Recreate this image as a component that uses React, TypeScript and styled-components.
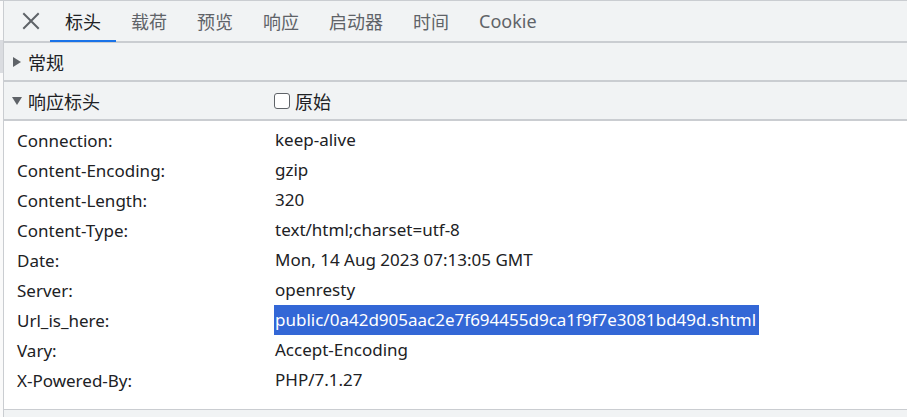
import React from 'react'
import styled, {createGlobalStyle} from 'styled-components'

const GlobalStyle = createGlobalStyle`
  html, body {
    margin: 0;
    padding: 0;
    background: #f1f3f4;
  }
  body {
    font-family: 'Segoe UI', 'Noto Sans', 'Noto Sans CJK SC', sans-serif;
    color: #202124;
  }
`

const Layout = styled.div`
  display: flex;
  width: 907px;
  height: 417px;
  overflow: hidden;
  border-top: 1px solid #cacdd1;
  box-sizing: border-box;
`

const SideStrip = styled.div`
  width: 3px;
  flex: none;
  display: flex;
  flex-direction: column;
  background: #fafafa;
  padding-top: 39px;
`

const SideMark = styled.div`
  height: 33px;
  background: #dadce0;
`

const Panel = styled.div`
  flex: 1;
  display: flex;
  flex-direction: column;
  border-left: 1px solid #cacdd1;
  background: #f1f3f4;
  min-width: 0;
`

const TabBar = styled.div`
  display: flex;
  align-items: stretch;
  height: 40px;
  border-bottom: 2px solid #cacdd1;
  background: #f1f3f4;
  box-sizing: content-box;
`

const CloseButton = styled.div`
  width: 46px;
  padding-left: 8px;
  box-sizing: border-box;
  display: flex;
  align-items: center;
  justify-content: center;
  color: #5f6368;
`

const Tab = styled.div<{active?: boolean}>`
  display: flex;
  align-items: center;
  padding: 0 15px;
  margin-right: 0;
  font-size: 18px;
  color: ${(p) => (p.active ? '#202124' : '#5f6368')};
  border-bottom: 2px solid ${(p) => (p.active ? '#1a73e8' : 'transparent')};
  margin-bottom: -1px;
  box-sizing: border-box;
  white-space: nowrap;
`

const SectionHeader = styled.div`
  display: flex;
  align-items: center;
  height: 37px;
  border-bottom: 2px solid #cacdd1;
  background: #f1f3f4;
  font-size: 18px;
  box-sizing: content-box;
`

const Arrow = styled.span`
  width: 23px;
  display: flex;
  justify-content: center;
  padding-left: 1px;
  color: #5f6368;
`

const HeaderTitle = styled.span`
  width: 246px;
`

const RawToggle = styled.label`
  display: flex;
  align-items: center;
  gap: 5px;
`

const CheckBox = styled.span`
  width: 14px;
  height: 14px;
  border: 1.5px solid #5f6368;
  border-radius: 3px;
  background: #fff;
`

const HeaderList = styled.div`
  background: #fff;
  padding: 4px 0 14px;
  border-bottom: 1px solid #cacdd1;
`

const HeaderRow = styled.div`
  display: flex;
  align-items: center;
  height: 30px;
  font-size: 17px;
  color: #202124;
`

const HeaderName = styled.div`
  width: 258px;
  padding-left: 13px;
  flex: none;
`

const HeaderValue = styled.div<{selected?: boolean}>`
  padding: 3px 0 4px;
  margin-left: -1px;
  padding-left: 1px;
  padding-right: ${(p) => (p.selected ? '3px' : '0')};
  background: ${(p) => (p.selected ? '#3367d6' : 'transparent')};
  color: ${(p) => (p.selected ? '#fff' : '#202124')};
  white-space: nowrap;
`

const Triangle = ({open}: {open?: boolean}) => (
  <svg width="10" height="10" viewBox="0 0 10 10">
    {open ? (
      <path d="M0 1 L10 1 L5 9 Z" fill="currentColor" />
    ) : (
      <path d="M1 0 L9 5 L1 10 Z" fill="currentColor" />
    )}
  </svg>
)

const CloseIcon = () => (
  <svg width="18" height="18" viewBox="0 0 18 18">
    <path
      d="M2 2 L16 16 M16 2 L2 16"
      stroke="currentColor"
      strokeWidth="2"
      strokeLinecap="square"
    />
  </svg>
)

const tabs = ['标头', '载荷', '预览', '响应', '启动器', '时间', 'Cookie']

const headers: [string, string][] = [
  ['Connection:', 'keep-alive'],
  ['Content-Encoding:', 'gzip'],
  ['Content-Length:', '320'],
  ['Content-Type:', 'text/html;charset=utf-8'],
  ['Date:', 'Mon, 14 Aug 2023 07:13:05 GMT'],
  ['Server:', 'openresty'],
  ['Url_is_here:', 'public/0a42d905aac2e7f694455d9ca1f9f7e3081bd49d.shtml'],
  ['Vary:', 'Accept-Encoding'],
  ['X-Powered-By:', 'PHP/7.1.27'],
]

export default function App() {
  return (
    <>
      <GlobalStyle />
      <Layout>
        <SideStrip>
          <SideMark />
        </SideStrip>
        <Panel>
          <TabBar>
            <CloseButton>
              <CloseIcon />
            </CloseButton>
            {tabs.map((t, i) => (
              <Tab key={t} active={i === 0}>
                {t}
              </Tab>
            ))}
          </TabBar>

          <SectionHeader>
            <Arrow>
              <Triangle />
            </Arrow>
            <HeaderTitle>常规</HeaderTitle>
          </SectionHeader>

          <SectionHeader>
            <Arrow>
              <Triangle open />
            </Arrow>
            <HeaderTitle>响应标头</HeaderTitle>
            <RawToggle>
              <CheckBox />
              原始
            </RawToggle>
          </SectionHeader>

          <HeaderList>
            {headers.map(([name, value]) => (
              <HeaderRow key={name}>
                <HeaderName>{name}</HeaderName>
                <HeaderValue selected={name === 'Url_is_here:'}>
                  {value}
                </HeaderValue>
              </HeaderRow>
            ))}
          </HeaderList>
        </Panel>
      </Layout>
    </>
  )
}
